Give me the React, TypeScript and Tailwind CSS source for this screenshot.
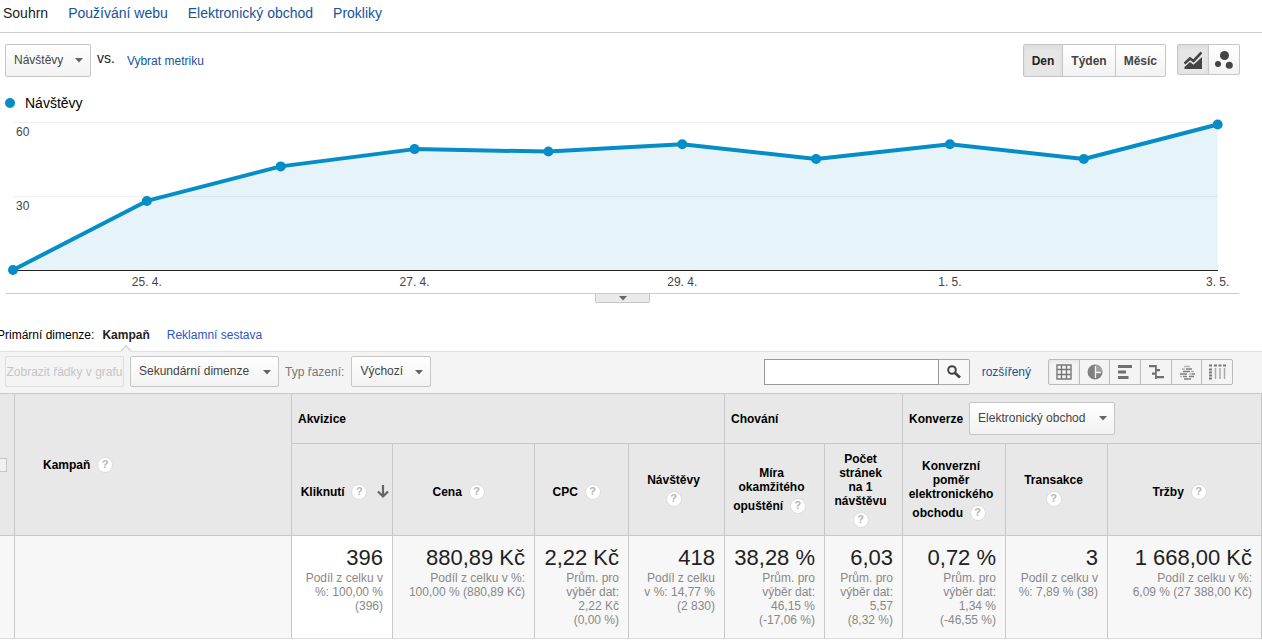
import { useState } from 'react';
import clsx from 'clsx';

const tabs = ['Souhrn', 'Používání webu', 'Elektronický obchod', 'Prokliky'];

const visits = [0, 28, 42, 49, 48, 51, 45, 51, 45, 59];

const dateLabels = [
  { index: 1, text: '25. 4.' },
  { index: 3, text: '27. 4.' },
  { index: 5, text: '29. 4.' },
  { index: 7, text: '1. 5.' },
  { index: 9, text: '3. 5.' },
];

interface Column {
  label: string[];
  help: 'inline' | 'below';
  value: string;
  note: string;
  sorted?: boolean;
}

const columns: Column[] = [
  { label: ['Kliknutí'], help: 'inline', value: '396', note: 'Podíl z celku v\n%: 100,00 %\n(396)', sorted: true },
  { label: ['Cena'], help: 'inline', value: '880,89 Kč', note: 'Podíl z celku v %:\n100,00 % (880,89 Kč)' },
  { label: ['CPC'], help: 'inline', value: '2,22 Kč', note: 'Prům. pro\nvýběr dat:\n2,22 Kč\n(0,00 %)' },
  { label: ['Návštěvy'], help: 'below', value: '418', note: 'Podíl z celku\nv %: 14,77 %\n(2 830)' },
  { label: ['Míra', 'okamžitého', 'opuštění'], help: 'inline', value: '38,28 %', note: 'Prům. pro\nvýběr dat:\n46,15 %\n(-17,06 %)' },
  { label: ['Počet', 'stránek', 'na 1', 'návštěvu'], help: 'below', value: '6,03', note: 'Prům. pro\nvýběr dat:\n5,57\n(8,32 %)' },
  { label: ['Konverzní', 'poměr', 'elektronického', 'obchodu'], help: 'inline', value: '0,72 %', note: 'Prům. pro\nvýběr dat:\n1,34 %\n(-46,55 %)' },
  { label: ['Transakce'], help: 'below', value: '3', note: 'Podíl z celku v\n%: 7,89 % (38)' },
  { label: ['Tržby'], help: 'inline', value: '1 668,00 Kč', note: 'Podíl z celku v %:\n6,09 % (27 388,00 Kč)' },
];

interface DropdownProps {
  label: string;
  value: string;
  className?: string;
}

const Dropdown: React.FC<DropdownProps> = ({ label, value, className }) => (
  <div className={clsx('relative shrink-0', className)}>
    <select
      aria-label={label}
      defaultValue={value}
      className="h-full w-full appearance-none rounded-xs border border-[#c6c6c6] bg-linear-to-b from-white to-[#f2f2f2] pr-6 pb-0.5 pl-2 text-xs text-[#444]"
    >
      <option>{value}</option>
    </select>
    <svg className="pointer-events-none absolute top-3.5 right-2 h-[5px] w-2" viewBox="0 0 8 5">
      <path d="M0 0h8L4 4.5z" fill="#666" />
    </svg>
  </div>
);

const Help: React.FC<{ className?: string }> = ({ className }) => (
  <button
    type="button"
    aria-label="Nápověda"
    className={clsx(
      'mt-1 inline-flex size-4 items-center justify-center rounded-full border border-[#ddd] bg-white align-baseline text-[11px] leading-none font-bold text-[#b5b5b5]',
      className,
    )}
  >
    ?
  </button>
);

const LineIcon = () => (
  <svg width="18" height="18" viewBox="0 0 18 18">
    <path d="M.5 12.5 6 7.500l3.500 2.500L17.500 1.500" fill="none" stroke="#444" strokeWidth="2.600" />
    <path d="M.5 18v-2L6 11l3.500 2.700L18 6v12z" fill="#444" />
  </svg>
);

const MotionIcon = () => (
  <svg width="18" height="18" viewBox="0 0 18 18" fill="#444">
    <circle cx="9.500" cy="4.500" r="4.500" />
    <circle cx="3" cy="13" r="3" />
    <circle cx="14.300" cy="14.300" r="3.500" />
  </svg>
);

const viewIcons = [
  {
    name: 'Tabulka',
    icon: <path d="M1 1h14v14H1zM1 5.500h14M1 10.500h14M5.500 1v14M10.500 1v14" fill="none" stroke="#777" strokeWidth="1.400" />,
  },
  {
    name: 'Procenta',
    icon: (
      <>
        <circle cx="8" cy="8" r="7.500" fill="#808080" />
        <path d="M8.500.5A7.500 7.500 0 0 1 15.500 8h-7z" fill="#a0a0a0" />
        <path d="M8.500 2v12M8.500 8.500H14" stroke="#f4f4f4" strokeWidth="1.300" />
      </>
    ),
  },
  { name: 'Výkon', icon: <path d="M1 1h14v3H1zM1 6.500h8v3H1zM1 12h10.500v3H1z" fill="#707070" /> },
  {
    name: 'Srovnání',
    icon: <path d="M7 1h1.800v14H7zM1 1h7v2.200H1zM8 5h4v2.200H8zM4 8.500h4v2.200H4zM8 12h8v2.200H8z" fill="#707070" />,
  },
  {
    name: 'Shluk termínů',
    icon: (
      <>
        <path d="M5 2.500h6M3 5h3M12 7.500h3M1 12.500h2M10 10h2" fill="none" stroke="#b5b5b5" strokeWidth="1.500" />
        <path d="M7 5h6M4 7.500h7M1 10h7M12.500 10H16M4 12.500h4M10 12.500h5M5 15h7" fill="none" stroke="#808080" strokeWidth="1.700" />
      </>
    ),
  },
  {
    name: 'Kontingenční',
    icon: (
      <>
        <path d="M0 1.500h3M5 1.500h3M9.500 1.500h3M14 1.500h3M0 5.500h3M0 8.500h3M0 11.500h3M0 14.500h3" stroke="#777" strokeWidth="1.800" />
        <path d="M6.500 4v11M11 4v11M15.500 4v11" stroke="#aaa" strokeWidth="1.500" />
      </>
    ),
  },
];

const VisitsChart = () => {
  const baseline = 154;
  const points = visits.map((v, i) => ({ x: 13 + i * 133.85, y: baseline - v * 2.467 }));
  const line = points.map((p) => `${p.x},${p.y}`).join(' ');

  return (
    <svg className="block w-full" viewBox="0 0 1262 177" fontSize="12" fill="#444">
      <path d="M13 6.500h1205M13 80.500h1205" stroke="#f0f0f0" />
      <polygon points={`${line} ${points[points.length - 1].x},${baseline}`} fill="#058dc7" fillOpacity="0.1" />
      <path d="M13 154.500h1205" stroke="#222" />
      <polyline points={line} fill="none" stroke="#058dc7" strokeWidth="4" strokeLinejoin="round" />
      {points.map((p) => (
        <circle key={p.x} cx={p.x} cy={p.y} r="5" fill="#058dc7" />
      ))}
      <text x="16" y="20">60</text>
      <text x="16" y="94">30</text>
      {dateLabels.map((d) => (
        <text key={d.text} x={points[d.index].x} y="170" textAnchor="middle">
          {d.text}
        </text>
      ))}
    </svg>
  );
};

const ColumnHeader: React.FC<{ column: Column }> = ({ column }) => {
  const inline = column.help === 'inline';
  const blocks = inline ? column.label.slice(0, -1) : column.label;

  return (
    <th className={column.sorted ? 'pl-1.5' : 'pr-1.5'}>
      {blocks.map((text) => (
        <div key={text}>{text}</div>
      ))}
      <div className="whitespace-nowrap">
        {inline && <>{column.label[column.label.length - 1]}&nbsp; </>}
        <Help className={inline ? 'mr-1' : undefined} />
        {column.sorted && (
          <svg className="ml-1.5 inline-block h-3.5 w-3" viewBox="0 0 12 14">
            <path d="M6 0v12M1 6.500l5 5 5-5" fill="none" stroke="#666" strokeWidth="2.200" />
          </svg>
        )}
      </div>
    </th>
  );
};

const DataTable = () => (
  <table className="w-full table-fixed border-separate border-spacing-0 border-t border-[#c8c8c8] text-xs leading-[14px]">
    <colgroup>
      <col className="w-[15px]" />
      <col className="w-[277px]" />
      <col className="w-[101px]" />
      <col className="w-[142px]" />
      <col className="w-[94px]" />
      <col className="w-[96px]" />
      <col className="w-[100px]" />
      <col className="w-[78px]" />
      <col className="w-[103px]" />
      <col className="w-[102px]" />
      <col className="w-[154px]" />
    </colgroup>
    <thead className="bg-[#e8e8e8] text-black [&_th]:border-r [&_th]:border-b [&_th]:border-[#c8c8c8]">
      <tr className="h-[50px] text-left">
        <th rowSpan={2}>
          <input
            type="checkbox"
            aria-label="Vybrat vše"
            className="-ml-[7px] block size-3.5 appearance-none border border-[#c6c6c6] bg-[#f0f0f0]"
          />
        </th>
        <th rowSpan={2} className="pb-1 pl-7">
          Kampaň&nbsp; <Help />
        </th>
        <th colSpan={4} className="pl-1.5">Akvizice</th>
        <th colSpan={2} className="pl-1.5">Chování</th>
        <th colSpan={3} className="pl-1.5">
          <div className="flex items-center gap-1.5">
            Konverze
            <Dropdown label="Konverze" value="Elektronický obchod" className="h-[33px] w-[146px] font-normal" />
          </div>
        </th>
      </tr>
      <tr className="h-[92px]">
        {columns.map((c) => (
          <ColumnHeader key={c.value} column={c} />
        ))}
      </tr>
    </thead>
    <tbody>
      <tr className="h-[103px] bg-[#f7f7f7] text-right align-top [&>td]:border-r [&>td]:border-b [&>td]:border-r-[#c8c8c8] [&>td]:border-b-[#ddd]">
        <td />
        <td />
        {columns.map((c) => (
          <td key={c.value} className={clsx('pt-[9px] pr-[9px]', c.sorted && 'bg-white')}>
            <div className="text-[22px] leading-[26px] whitespace-nowrap text-[#222]">{c.value}</div>
            <div className="whitespace-pre text-[#888]">{c.note}</div>
          </td>
        ))}
      </tr>
    </tbody>
  </table>
);

export default function App() {
  const [period, setPeriod] = useState('Den');
  const [view, setView] = useState('Tabulka');

  return (
    <div className="overflow-x-hidden bg-white font-['Liberation_Sans',Arial,sans-serif] text-xs text-[#222]">
      <nav className="flex h-[33px] gap-5 border-b border-[#ccc] pt-[3px] pl-[3px] text-sm leading-5">
        {tabs.map((tab, i) => (
          <a key={tab} href="#" className={i === 0 ? 'text-[#222]' : 'text-[#15539a]'}>
            {tab}
          </a>
        ))}
      </nav>

      <div className="flex items-start pt-[11px] pr-[22px] pl-[5px]">
        <Dropdown label="Metrika" value="Návštěvy" className="h-[33px] w-[86px]" />
        <span className="ml-1.5 pt-1 text-sm">vs.</span>
        <a href="#" className="ml-3 pt-[9px] text-[#15539a]">Vybrat metriku</a>
        <div className="ml-auto flex h-[33px] rounded-xs border border-[#c6c6c6] bg-linear-to-b from-white to-[#f2f2f2] font-bold text-[#444]">
          {['Den', 'Týden', 'Měsíc'].map((p) => (
            <button
              key={p}
              type="button"
              onClick={() => setPeriod(p)}
              className={clsx(
                'border-r border-[#c6c6c6] px-2 last:border-r-0',
                period === p && 'bg-[#e6e6e6] text-[#222] inset-shadow-sm',
              )}
            >
              {p}
            </button>
          ))}
        </div>
        <div className="ml-[11px] flex h-[31px] w-[63px] rounded-xs border border-[#c6c6c6] bg-linear-to-b from-white to-[#f2f2f2]">
          <button type="button" aria-label="Spojnicový graf" className="flex flex-1 items-center justify-center border-r border-[#c6c6c6] bg-[#e6e6e6] inset-shadow-sm">
            <LineIcon />
          </button>
          <button type="button" aria-label="Pohyblivý graf" className="flex flex-1 items-center justify-center">
            <MotionIcon />
          </button>
        </div>
      </div>

      <div className="mt-4 flex items-center gap-2.5 pl-[5px] text-sm leading-5 text-black">
        <span className="size-2.5 rounded-full bg-[#058dc7]" />
        Návštěvy
      </div>
      <div className="pt-[3px]">
        <VisitsChart />
      </div>
      <div className="mr-[23px] ml-1.5 flex h-[34px] items-start justify-center border-t border-[#ccc]">
        <button
          type="button"
          aria-label="Rozbalit graf"
          className="flex h-[9px] w-[55px] items-center justify-center rounded-b-xs border border-t-0 border-[#c6c6c6] bg-[#eaeaea]"
        >
          <svg width="8" height="5" viewBox="0 0 8 5">
            <path d="M0 0h8L4 4.500z" fill="#666" />
          </svg>
        </button>
      </div>

      <div className="-ml-[3px] flex h-6 items-start leading-4">
        <span className="text-black">Primární dimenze:</span>
        <span className="relative ml-2 h-6 font-bold">
          Kampaň
          <span className="absolute -bottom-1 left-1/2 size-2 -translate-x-1/2 rotate-45 border-t border-l border-[#ccc] bg-[#f4f4f4]" />
        </span>
        <a href="#" className="ml-[17px] text-[#2a56c6]">Reklamní sestava</a>
      </div>

      <div className="flex h-[42px] items-center border-t border-[#e0e0e0] bg-[#f4f4f4] pr-[29px] pb-0.5 pl-[5px]">
        <button type="button" disabled className="h-[31px] w-[119px] rounded-xs border border-[#ddd] whitespace-nowrap text-[#c4c4c4]">
          Zobrazit řádky v grafu
        </button>
        <Dropdown label="Sekundární dimenze" value="Sekundární dimenze" className="ml-1.5 h-[31px] w-[149px]" />
        <span className="ml-1.5 text-[#777]">Typ řazení:</span>
        <Dropdown label="Typ řazení" value="Výchozí" className="ml-[7px] h-[31px] w-20" />
        <div className="ml-auto flex h-[26px]">
          <input aria-label="Hledat" className="w-[175px] border border-[#999] bg-white px-1" />
          <button type="button" aria-label="Hledat" className="flex w-[31px] items-center justify-center rounded-r-xs border border-l-0 border-[#aaa] bg-[#f8f8f8]">
            <svg width="14" height="14" viewBox="0 0 14 14" fill="none" stroke="#444">
              <circle cx="5" cy="5" r="3.800" strokeWidth="2" />
              <path d="m8 8 5 4.500" strokeWidth="2.800" />
            </svg>
          </button>
        </div>
        <a href="#" className="ml-3 text-[#15539a]">rozšířený</a>
        <div className="ml-[17px] flex h-[26px] w-[185px] rounded-xs border border-[#bbb]">
          {viewIcons.map((v) => (
            <button
              key={v.name}
              type="button"
              aria-label={v.name}
              onClick={() => setView(v.name)}
              className={clsx(
                'flex flex-1 items-center justify-center border-r border-[#bbb] last:border-r-0',
                view === v.name && 'inset-shadow-sm',
              )}
            >
              <svg width={v.name === 'Kontingenční' ? 17 : 16} height="16" viewBox={v.name === 'Kontingenční' ? '0 0 17 16' : '0 0 16 16'}>
                {v.icon}
              </svg>
            </button>
          ))}
        </div>
      </div>

      <DataTable />
    </div>
  );
}
